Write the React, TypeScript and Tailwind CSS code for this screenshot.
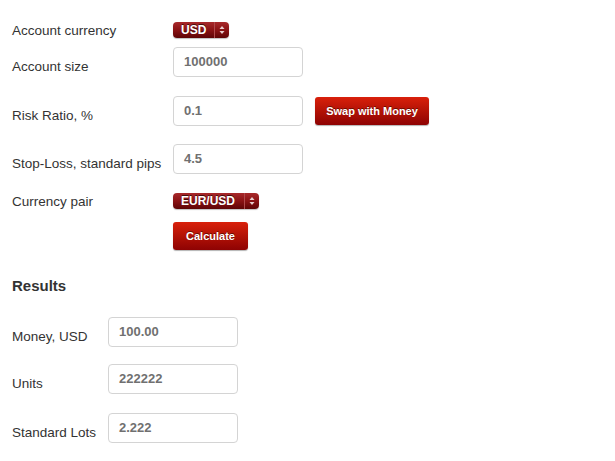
import React from "react";

function Select({ value, width }: { value: string; width: string }) {
    return (
        <div className={`${width} h-[16px] flex items-center rounded-[4px] bg-gradient-to-b from-[#a8292b] via-[#8a1214] to-[#5e0506] shadow-[0_1px_1px_rgba(0,0,0,0.25)]`}>
            <span className="flex-1 pl-[8px] text-[12px] leading-[16px] font-bold text-white [text-shadow:0_-1px_0_rgba(0,0,0,0.6)]">{value}</span>
            <span className="h-full w-px bg-[#b0494b]" />
            <svg width="14" height="16" viewBox="0 0 14 16" className="shrink-0">
                <path d="M4.5 7 L7 4 L9.5 7 Z" fill="#e9d0d0" />
                <path d="M4.5 9 L7 12 L9.5 9 Z" fill="#e9d0d0" />
            </svg>
        </div>
    );
}

function Button({ children, width }: { children: React.ReactNode; width: string }) {
    return (
        <button className={`${width} h-[28px] rounded-[3px] bg-gradient-to-b from-[#d9200b] to-[#8e0303] text-white text-[11px] font-bold [text-shadow:0_-1px_0_rgba(0,0,0,0.45)] shadow-[0_1px_1px_rgba(0,0,0,0.3)]`}>
            {children}
        </button>
    );
}

function Field({ value }: { value: string }) {
    return (
        <div className="w-[130px] h-[30px] flex items-center pl-[10px] rounded-[4px] border border-[#d4d4d4] bg-white text-[13px] font-bold text-[#707070]">
            {value}
        </div>
    );
}

export default function App() {
    return (
        <div className="min-h-[461px] bg-white pl-[12px] flex flex-col text-[#333] font-['Liberation_Sans',Arial,sans-serif]">
            {/* settings */}
            <div className="mt-[22px] h-[16px] flex items-center">
                <label className="w-[161px] text-[13.5px] leading-[16px] translate-y-[1px]">Account currency</label>
                <Select value="USD" width="w-[56px]" />
            </div>

            <div className="mt-[9px] flex items-center">
                <label className="w-[161px] text-[13.5px] leading-[16px] pt-[10px]">Account size</label>
                <Field value="100000" />
            </div>

            <div className="mt-[19px] flex items-center">
                <label className="w-[161px] text-[13.5px] leading-[16px] pt-[10px]">Risk Ratio, %</label>
                <Field value="0.1" />
                <div className="ml-[12px]">
                    <Button width="w-[114px]">Swap with Money</Button>
                </div>
            </div>

            <div className="mt-[18px] flex items-center">
                <label className="w-[161px] text-[13.5px] leading-[16px] pt-[10px]">Stop-Loss, standard pips</label>
                <Field value="4.5" />
            </div>

            <div className="mt-[19px] h-[16px] flex items-center">
                <label className="w-[161px] text-[13.5px] leading-[16px] translate-y-[1px]">Currency pair</label>
                <Select value="EUR/USD" width="w-[86px]" />
            </div>

            <div className="mt-[13px] pl-[161px] flex">
                <Button width="w-[75px]">Calculate</Button>
            </div>

            {/* results */}
            <h2 className="mt-[27px] text-[15px] leading-[18px] font-bold text-[#333]">Results</h2>

            <div className="mt-[22px] flex items-center">
                <label className="w-[96px] text-[13.5px] leading-[16px] pt-[10px]">Money, USD</label>
                <Field value="100.00" />
            </div>

            <div className="mt-[17px] flex items-center">
                <label className="w-[96px] text-[13.5px] leading-[16px] pt-[10px]">Units</label>
                <Field value="222222" />
            </div>

            <div className="mt-[19px] flex items-center">
                <label className="w-[96px] text-[13.5px] leading-[16px] pt-[10px]">Standard Lots</label>
                <Field value="2.222" />
            </div>
        </div>
    );
}
